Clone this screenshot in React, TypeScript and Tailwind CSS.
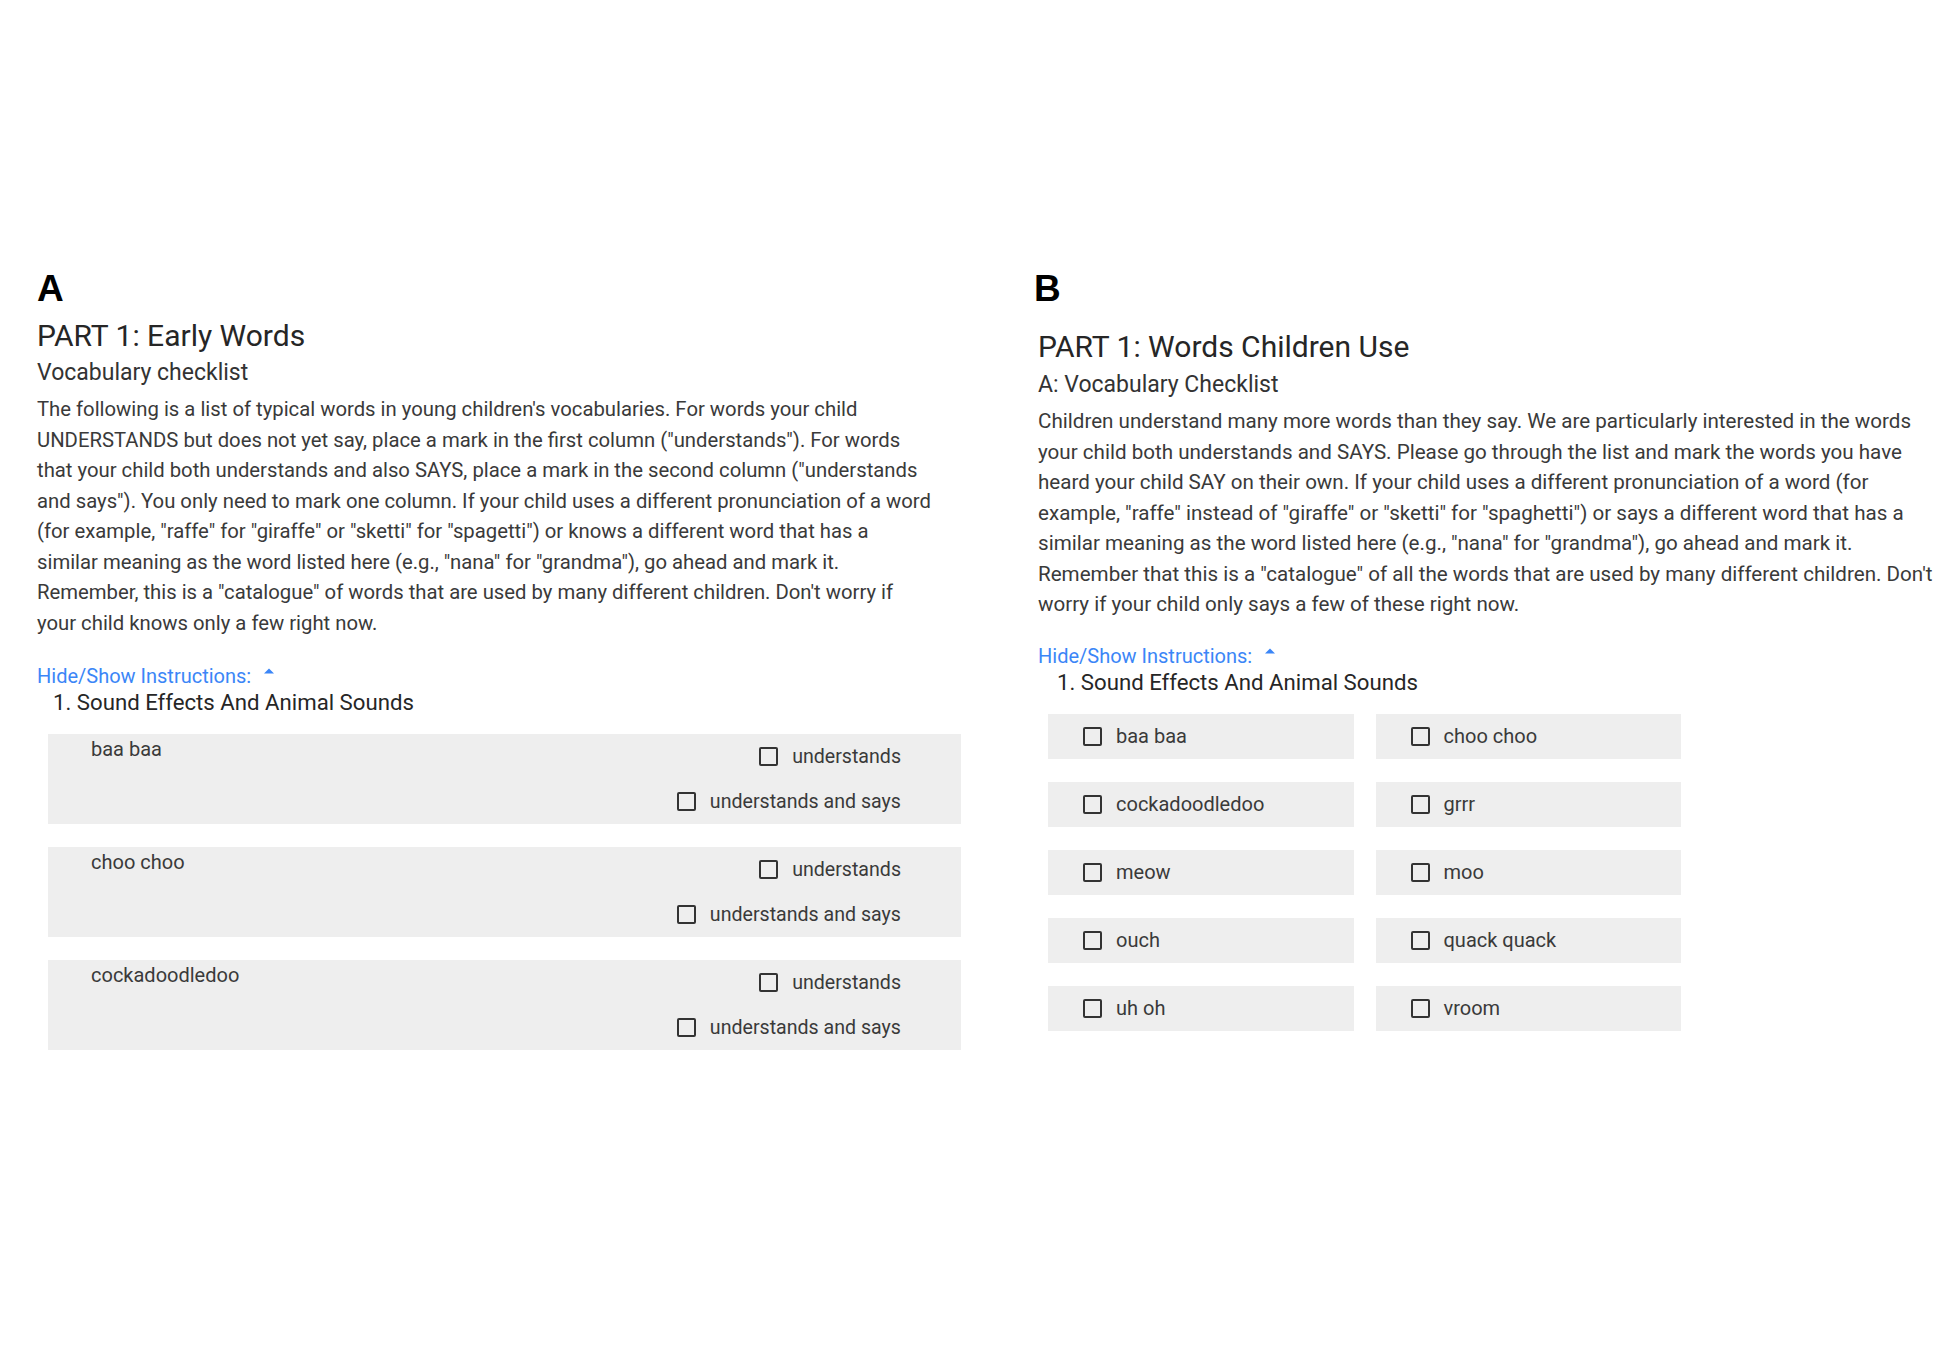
import React from "react";

const leftTextA =
  'The following is a list of typical words in young children\'s vocabularies. For words your child UNDERSTANDS but does not yet say, place a mark in the first column ("understands"). For words that your child both understands and also SAYS, place a mark in the second column ("understands and says"). You only need to mark one column. If your child uses a different pronunciation of a word (for example, "raffe" for "giraffe" or "sketti" for "spagetti") or knows a different word that has a';
const leftTextB =
  'similar meaning as the word listed here (e.g., "nana" for "grandma"), go ahead and mark it. Remember, this is a "catalogue" of words that are used by many different children. Don\'t worry if your child knows only a few right now.';

const rightText =
  'Children understand many more words than they say. We are particularly interested in the words your child both understands and SAYS. Please go through the list and mark the words you have heard your child SAY on their own. If your child uses a different pronunciation of a word (for example, "raffe" instead of "giraffe" or "sketti" for "spaghetti") or says a different word that has a similar meaning as the word listed here (e.g., "nana" for "grandma"), go ahead and mark it. Remember that this is a "catalogue" of all the words that are used by many different children. Don\'t worry if your child only says a few of these right now.';

function Box() {
  return <span className="block w-[19px] h-[19px] shrink-0 rounded-[2px] border-2 border-[#333333]" />;
}

function HideShow() {
  return (
    <div className="flex items-start text-[20px] leading-none text-[#3b86f7]">
      <span>Hide/Show Instructions:</span>
      <svg width="10" height="6" viewBox="0 0 10 6" className="ml-[13px] mt-[2px]">
        <path d="M0 5.5 L5 0.5 L10 5.5 Z" fill="#3b86f7" />
      </svg>
    </div>
  );
}

const leftWords = ["baa baa", "choo choo", "cockadoodledoo"];
const rightWords = ["baa baa", "choo choo", "cockadoodledoo", "grrr", "meow", "moo", "ouch", "quack quack", "uh oh", "vroom"];

export default function App() {
  return (
    <div className="w-[1950px] h-[1350px] bg-white flex font-[Roboto,sans-serif] text-[#333333]">
      <div className="w-[1001px] pl-[37px] pt-[270px] flex flex-col items-start">
        <div className="font-['Liberation_Sans',Arial,sans-serif] font-bold text-[37px] leading-none text-black">A</div>
        <div className="mt-[14px] text-[30px] leading-none text-[#262626]">PART 1: Early Words</div>
        <div className="mt-[10px] text-[23px] leading-none text-[#333333]">Vocabulary checklist</div>
        <p className="mt-[10px] w-[900px] text-[20.3px] leading-[30.5px] text-[#3a3a3a]">
          {leftTextA}
          <br />
          {leftTextB}
        </p>
        <div className="mt-[28px]">
          <HideShow />
        </div>
        <div className="mt-[5px] pl-[16px] text-[22.2px] leading-none text-[#262626]">1. Sound Effects And Animal Sounds</div>
        <div className="mt-[21px] ml-[11px] w-[913px] flex flex-col gap-[23px]">
          {leftWords.map((w) => (
            <div key={w} className="h-[90px] bg-[#eeeeee] flex justify-between pl-[43px] pr-[60px]">
              <div className="pt-[5px] text-[20px] leading-[20px] text-[#3a3a3a]">{w}</div>
              <div className="flex flex-col items-end">
                <div className="h-[46px] flex items-center gap-[14px] text-[19.6px] text-[#3a3a3a]">
                  <Box />
                  <span>understands</span>
                </div>
                <div className="h-[46px] flex items-center gap-[14px] text-[19.6px] text-[#3a3a3a]">
                  <Box />
                  <span>understands and says</span>
                </div>
              </div>
            </div>
          ))}
        </div>
      </div>
      <div className="flex-1 pl-[37px] pt-[270px] flex flex-col items-start">
        <div className="-ml-[4px] font-['Liberation_Sans',Arial,sans-serif] font-bold text-[37px] leading-none text-black">B</div>
        <div className="mt-[25px] text-[30px] leading-none text-[#262626]">PART 1: Words Children Use</div>
        <div className="mt-[11px] text-[23px] leading-none text-[#333333]">A: Vocabulary Checklist</div>
        <p className="mt-[10px] w-[895px] text-[20.6px] leading-[30.5px] text-[#3a3a3a]">{rightText}</p>
        <div className="mt-[26px]">
          <HideShow />
        </div>
        <div className="mt-[5px] pl-[19px] text-[22.2px] leading-none text-[#262626]">1. Sound Effects And Animal Sounds</div>
        <div className="mt-[21px] ml-[10px] w-[633px] grid grid-cols-2 gap-x-[22px] gap-y-[23px]">
          {rightWords.map((w) => (
            <div key={w} className="h-[45px] bg-[#eeeeee] flex items-center pl-[35px] gap-[14px] text-[20px] text-[#3a3a3a]">
              <Box />
              <span>{w}</span>
            </div>
          ))}
        </div>
      </div>
    </div>
  );
}
